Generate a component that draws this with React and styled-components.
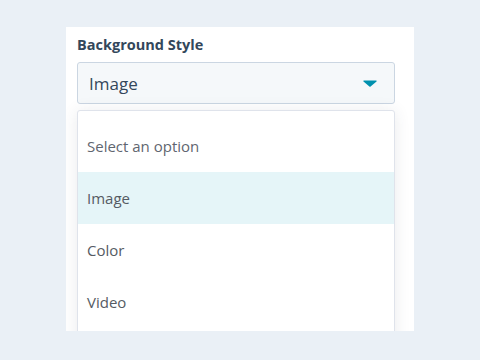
import React, { useState } from 'react'
import styled, { createGlobalStyle } from 'styled-components'

const GlobalStyle = createGlobalStyle`
  html, body {
    margin: 0;
    padding: 0;
    background: #eaf0f6;
    font-family: "Open Sans", Lato, Arial, sans-serif;
  }
  body {
    width: 480px;
    height: 360px;
    overflow: hidden;
  }
`

const Page = styled.div`
  padding: 27px 0 0 66px;
  height: 360px;
  box-sizing: border-box;
`

const Panel = styled.div`
  width: 348px;
  height: 304px;
  box-sizing: border-box;
  background: #ffffff;
  padding: 9px 19px 0 11px;
  overflow: hidden;
`

const Label = styled.div`
  font-size: 14.5px;
  line-height: 18px;
  font-weight: 700;
  color: #33475b;
  margin-bottom: 8px;
`

const SelectBox = styled.button`
  display: flex;
  align-items: center;
  justify-content: space-between;
  width: 318px;
  height: 42px;
  box-sizing: border-box;
  padding: 0 17px 0 11px;
  background: #f5f8fa;
  border: 1px solid #cbd6e2;
  border-radius: 3px;
  font-family: inherit;
  font-size: 17px;
  color: #33475b;
  cursor: pointer;
`

const Menu = styled.ul`
  list-style: none;
  margin: 6px 0 0;
  padding: 9px 0 40px;
  width: 318px;
  box-sizing: border-box;
  background: #ffffff;
  border: 1px solid #dfe3eb;
  border-radius: 3px;
  box-shadow: 0 1px 16px rgba(45, 62, 80, 0.1);
`

const Option = styled.li`
  height: 52px;
  display: flex;
  align-items: center;
  padding-left: 9px;
  font-size: 15px;
  color: ${p => (p.$placeholder ? '#5f6670' : '#555b63')};
  background: ${p => (p.$active ? '#e5f5f8' : 'transparent')};
  cursor: pointer;
`

const Caret = () => (
  <svg width="14" height="7" viewBox="0 0 14 7">
    <path d="M1 0.5h12c0.6 0 0.9 0.7 0.5 1.1L7.6 6.4c-0.3 0.3-0.9 0.3-1.2 0L0.5 1.6C0.1 1.2 0.4 0.5 1 0.5z" fill="#0091ae" />
  </svg>
)

const options = ['Image', 'Color', 'Video']

export default function App () {
  const [value, setValue] = useState('Image')
  return (
    <Page>
      <GlobalStyle />
      <Panel>
        <Label>Background Style</Label>
        <SelectBox type="button">
          <span>{value}</span>
          <Caret />
        </SelectBox>
        <Menu>
          <Option $placeholder>Select an option</Option>
          {options.map(o => (
            <Option key={o} $active={o === value} onClick={() => setValue(o)}>{o}</Option>
          ))}
        </Menu>
      </Panel>
    </Page>
  )
}
